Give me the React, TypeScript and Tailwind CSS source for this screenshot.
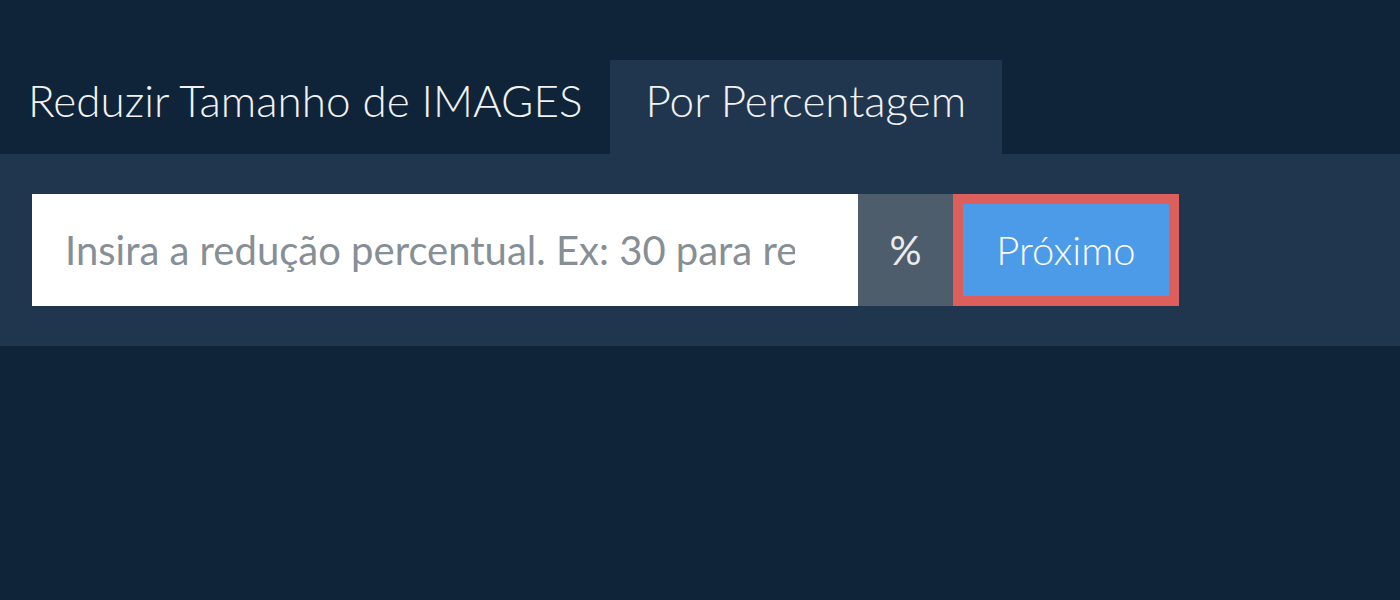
export default function App() {
    return (
        <div className="min-h-[600px] bg-[#0f2439] pt-[60px] font-['Lato',sans-serif]">
            <div className="flex h-[94px]">
                <div className="pt-[7px] pl-[28px] pr-[27px] text-[44px] font-light text-[#f2f2f2]">
                    Reduzir Tamanho de IMAGES
                </div>
                <div className="bg-[#20364f] pt-[7px] px-[36px] text-[44px] font-light text-[#f2f2f2]">
                    Por Percentagem
                </div>
            </div>

            <div className="flex bg-[#20364f] py-[40px] pl-[32px]">
                <input
                    type="text"
                    placeholder="Insira a redução percentual. Ex: 30 para reduzir 30%"
                    className="h-[112px] w-[826px] bg-white pl-[33px] pr-[63px] text-[40px] text-[#333] outline-none placeholder:text-[#868e96]"
                />
                <div className="flex w-[95px] items-center justify-center bg-[#4e5d6c] text-[40px] text-[#ebebeb]">
                    %
                </div>
                <button className="h-[112px] w-[226px] border-[10px] border-[#dc5f5c] bg-[#4c9be8] text-[40px] font-light text-white">
                    Próximo
                </button>
            </div>
        </div>
    )
}
